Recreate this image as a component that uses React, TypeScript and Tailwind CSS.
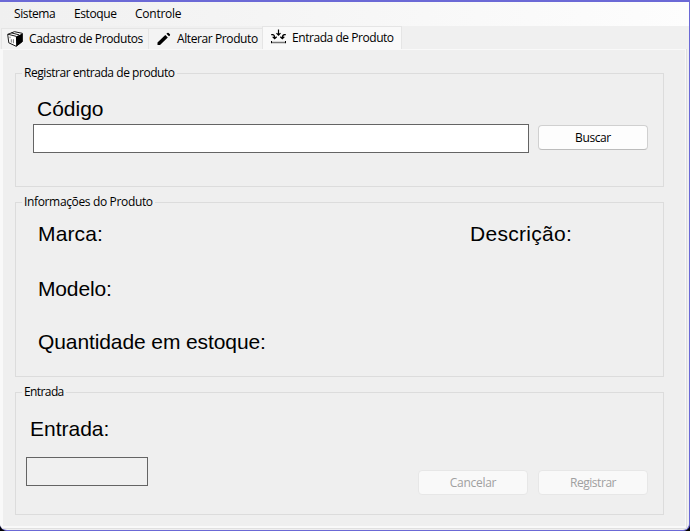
import React from "react";

const ui = "font-['Open_Sans','Noto_Sans',sans-serif] text-[12px] leading-[15px] whitespace-nowrap";

function BoxIcon() {
  return (
    <svg width="16" height="16" viewBox="0 0 16 16" className="shrink-0">
      <path d="M0.7 3.4 7.4 0.7 15.3 2.3 15.3 10.6 9.2 15.3 1.8 11.8Z" fill="#fff" stroke="#000" strokeWidth="0.9" strokeLinejoin="round" />
      <path d="M8.9 5.5 15.5 2.4V10.8L9.2 15.5Z" fill="#000" />
      <path d="M0.8 3.2 9 5.3M4.3 1.9 12 3.8" fill="none" stroke="#000" strokeWidth="0.9" />
      <path d="M4.3 8.2v3.4M6.4 8.2v4M3 5.6v1.6" fill="none" stroke="#444" strokeWidth="0.7" />
    </svg>
  );
}

function PencilIcon() {
  return (
    <svg width="14" height="14" viewBox="0 0 14 14" className="shrink-0">
      <path d="M0.5 13.1V10.6L8.3 2.9 10.8 5.4 3 13.1Z" fill="#000" />
      <path d="M9.4 1.8 10.4 0.9Q11 0.4 11.6 0.9L12.9 2.2Q13.4 2.8 12.9 3.4L12 4.3Z" fill="#000" />
    </svg>
  );
}

function EntryIcon() {
  return (
    <svg width="16" height="16" viewBox="0 0 16 16" fill="none" stroke="#000" strokeWidth="1.2" className="shrink-0">
      <path d="M7.5 0.5V6M5.5 4.1 7.5 6.2 9.5 4.1" />
      <path d="M0.2 5.7H1.4Q3.7 5.7 3.7 9M1.7 7.8 3.7 9.7 5.7 7.8" />
      <path d="M14.8 5.7H13.6Q11.3 5.7 11.3 9M9.3 7.8 11.3 9.7 13.3 7.8" />
      <path d="M0.5 13.5H14.5" stroke="#777" strokeWidth="1.6" />
      <path d="M0.5 12V14.2M14.5 12V14.2" strokeWidth="1" />
    </svg>
  );
}

function Group({ title, className, spacing, children }: { title: string; className: string; spacing: string; children: React.ReactNode }) {
  return (
    <fieldset className={`w-[649px] border border-[#dcdcdc] ${className}`}>
      <legend className={`${ui} ${spacing} ml-[6px] h-[15px] px-[2px]`}>
        <span className="-mt-px block">{title}</span>
      </legend>
      {children}
    </fieldset>
  );
}

function Label({ children, className = "" }: { children: string; className?: string }) {
  return <div className={`whitespace-nowrap font-['Liberation_Sans',Arial,sans-serif] text-[21px] leading-[24px] ${className}`}>{children}</div>;
}

export default function App() {
  return (
    <div className="h-[531px] w-[690px] overflow-hidden bg-black">
      <div className="flex h-[531px] w-[690px] flex-col overflow-hidden rounded-b-[7px] border-t-2 border-r border-b border-[#6b69d6] bg-[#f0f0f0] text-black">
        <nav className={`${ui} flex h-[24px] shrink-0 items-center bg-linear-to-r from-[#f0f0f0] to-[#fdfdfd] pb-px pl-[14px]`}>
          <span className="w-[60px] tracking-[-0.4px]">Sistema</span>
          <span className="w-[61px] tracking-[-0.4px]">Estoque</span>
          <span className="tracking-[-0.25px]">Controle</span>
        </nav>
        <div className={`${ui} flex h-[23px] shrink-0 items-end pl-px`}>
          <div className="flex h-[21px] w-[147px] items-center border-t border-l border-[#e5e5e5] bg-[#f3f3f3] pl-[5px]">
            <BoxIcon />
            <span className="mt-[2px] ml-[6px] self-start tracking-[-0.4px]">Cadastro de Produtos</span>
          </div>
          <div className="flex h-[21px] w-[114px] items-center border-t border-l border-[#e5e5e5] bg-[#f3f3f3] pl-[8px]">
            <PencilIcon />
            <span className="mt-[2px] ml-[6px] self-start tracking-[-0.4px]">Alterar Produto</span>
          </div>
          <div className="flex h-[23px] w-[140px] items-start border-t border-r border-l border-[#e5e5e5] bg-[#f9f9f9] pt-[2px] pl-[8px]">
            <EntryIcon />
            <span className="mt-px ml-[5px] tracking-[-0.45px]">Entrada de Produto</span>
          </div>
        </div>
        <main className="mr-[2px] mb-px flex min-h-0 flex-1 flex-col border-r border-b border-[#e0e0e0] bg-[#f9f9f9] pt-px pr-px pb-[2px] pl-[3px]">
          <div className="flex-1 bg-[#efefef] pt-[16px] pl-[12px]">
            <Group title="Registrar entrada de produto" spacing="tracking-[-0.45px]" className="h-[121px]">
              <Label className="mt-[16px] ml-[21px]">Código</Label>
              <div className="mt-[3px] ml-[17px] flex items-start">
                <input className="h-[29px] w-[496px] border border-[#646464] bg-white" />
                <button className={`${ui} mt-px ml-[9px] h-[25px] w-[110px] rounded-[4px] border border-[#d0d0d0] border-b-[#bcbcbc] bg-[#fdfdfd] tracking-[-0.4px]`}>Buscar</button>
              </div>
            </Group>
            <Group title="Informações do Produto" spacing="tracking-[-0.35px]" className="mt-[8px] h-[182px]">
              <div className="mt-[12px] ml-[22px] flex">
                <Label className="w-[432px] tracking-[0.15px]">Marca:</Label>
                <Label className="tracking-[0.3px]">Descrição:</Label>
              </div>
              <Label className="mt-[31px] ml-[22px] tracking-[-0.15px]">Modelo:</Label>
              <Label className="mt-[29px] ml-[22px] tracking-[-0.1px]">Quantidade em estoque:</Label>
            </Group>
            <Group title="Entrada" spacing="tracking-[-0.6px]" className="mt-[8px] h-[130px]">
              <Label className="mt-[17px] ml-[14px]">Entrada:</Label>
              <div className="mt-[16px] flex">
                <input className="ml-[10px] h-[29px] w-[122px] border border-[#646464] bg-[#f0f0f0]" />
                <button disabled className={`${ui} mt-[13px] ml-[270px] h-[25px] w-[110px] rounded-[4px] border border-[#e7e7e7] bg-[#f9f9f9] tracking-[-0.3px] text-[#a0a0a0]`}>Cancelar</button>
                <button disabled className={`${ui} mt-[13px] ml-[10px] h-[25px] w-[110px] rounded-[4px] border border-[#e7e7e7] bg-[#f9f9f9] tracking-[-0.45px] text-[#a0a0a0]`}>Registrar</button>
              </div>
            </Group>
          </div>
        </main>
      </div>
    </div>
  );
}
